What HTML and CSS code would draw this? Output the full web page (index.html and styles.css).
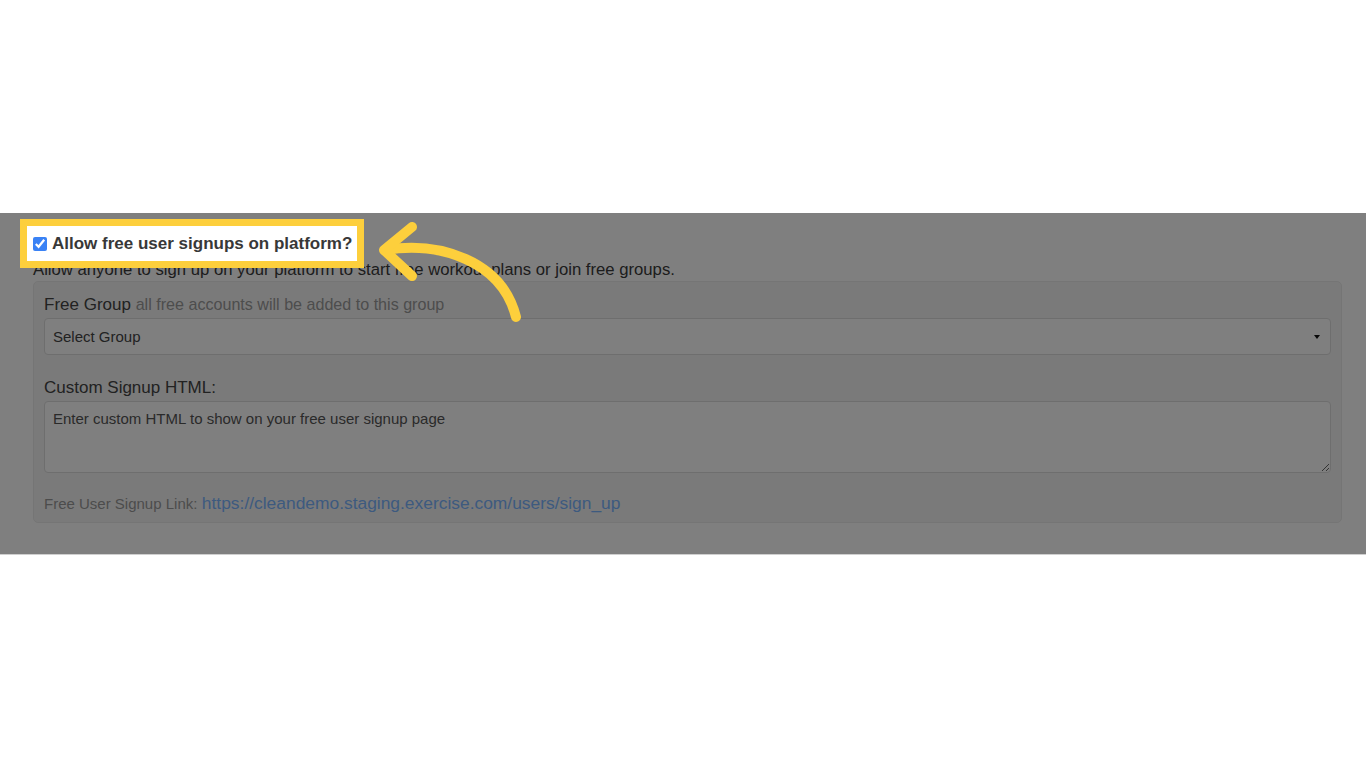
FILE: index.html
```html
<!DOCTYPE html>
<html lang="en">
<head>
<meta charset="utf-8">
<title>Free user signups</title>
<link rel="stylesheet" href="styles.css">
</head>
<body>
<div class="top-space"></div>
<section class="band">
  <label class="highlight">
    <input type="checkbox" class="check" checked>
    <span class="label-text">Allow free user signups on platform?</span>
  </label>
  <p class="desc">Allow anyone to sign up on your platform to start free workout plans or join free groups.</p>
  <div class="well">
    <div class="field-label">Free Group <small class="hint">all free accounts will be added to this group</small></div>
    <div class="select">Select Group</div>
    <div class="field-label field-gap">Custom Signup HTML:</div>
    <textarea class="textarea" placeholder="Enter custom HTML to show on your free user signup page"></textarea>
    <div class="link-row"><span class="link-label">Free User Signup Link:</span> <a class="link" href="#">https://cleandemo.staging.exercise.com/users/sign_up</a></div>
  </div>
  <div class="overlay"></div>
  <svg class="arrow" width="600" height="150" viewBox="0 0 600 150">
    <path d="M385 37 C440 28 502 48 516 104" fill="none" stroke="#fdcf3c" stroke-width="10" stroke-linecap="round"/>
    <path d="M412 14 L384 37 L412 63" fill="none" stroke="#fdcf3c" stroke-width="10" stroke-linecap="round" stroke-linejoin="round"/>
  </svg>
</section>
<div class="bottom-line"></div>
</body>
</html>
```

FILE: styles.css
```css
html, body {
  margin: 0;
  padding: 0;
  background: #ffffff;
  font-family: "Liberation Sans", Arial, sans-serif;
  color: #333;
}

.top-space {
  height: 213px;
}

.band {
  position: relative;
  background: #ffffff;
  padding: 13px 24px 32px 33px;
  height: 341px;
  box-sizing: border-box;
}

.highlight {
  position: relative;
  z-index: 2;
  display: inline-flex;
  align-items: center;
  height: 35px;
  margin-left: -6px;
  padding: 1px 5px 0 6px;
  background: #ffffff;
  outline: 7px solid #fdcf3c;
  box-sizing: border-box;
}

.check {
  width: 14px;
  height: 14px;
  margin: 0 5px 0 0;
  accent-color: #3a82f5;
}

.label-text {
  font-weight: bold;
  font-size: 17px;
  color: #383838;
}

.desc {
  margin: -1px 0 0 0;
  font-size: 16.7px;
  line-height: 20px;
  color: #3a3a3a;
}

.well {
  margin-top: 1px;
  background: #f5f5f5;
  border: 1px solid #ebebeb;
  border-radius: 5px;
  padding: 10px 10px 6px 10px;
}

.field-label {
  font-size: 17px;
  line-height: 24px;
  color: #444;
}

.field-gap {
  margin-top: 21px;
}

.hint {
  font-size: 16.1px;
  color: #9a9a9a;
}

.select {
  position: relative;
  margin-top: 1px;
  height: 37px;
  box-sizing: border-box;
  border: 1px solid #dcdcdc;
  border-radius: 4px;
  background: #ffffff;
  padding: 0 8px;
  font-size: 15px;
  line-height: 36px;
  color: #444;
}

.select::after {
  content: "";
  position: absolute;
  right: 10px;
  top: 16px;
  border-left: 3.5px solid transparent;
  border-right: 3.5px solid transparent;
  border-top: 4px solid #111;
}

.textarea {
  display: block;
  width: 100%;
  height: 72px;
  margin-top: 1px;
  box-sizing: border-box;
  border: 1px solid #dcdcdc;
  border-radius: 4px;
  background: #ffffff;
  padding: 7px 8px;
  font-family: "Liberation Sans", Arial, sans-serif;
  font-size: 15px;
  line-height: 20px;
  color: #555;
}

.textarea::placeholder {
  color: #555;
  opacity: 1;
}

.link-row {
  margin-top: 18px;
  line-height: 24px;
}

.link-label {
  font-size: 15px;
  color: #999;
}

.link {
  font-size: 17.4px;
  color: #7bb4ff;
  text-decoration: none;
}

.overlay {
  position: absolute;
  inset: 0;
  background: rgba(0, 0, 0, 0.5);
  z-index: 1;
}

.arrow {
  position: absolute;
  left: 0;
  top: 0;
  z-index: 3;
}

.bottom-line {
  height: 1px;
  background: #cfcfcf;
}
```
